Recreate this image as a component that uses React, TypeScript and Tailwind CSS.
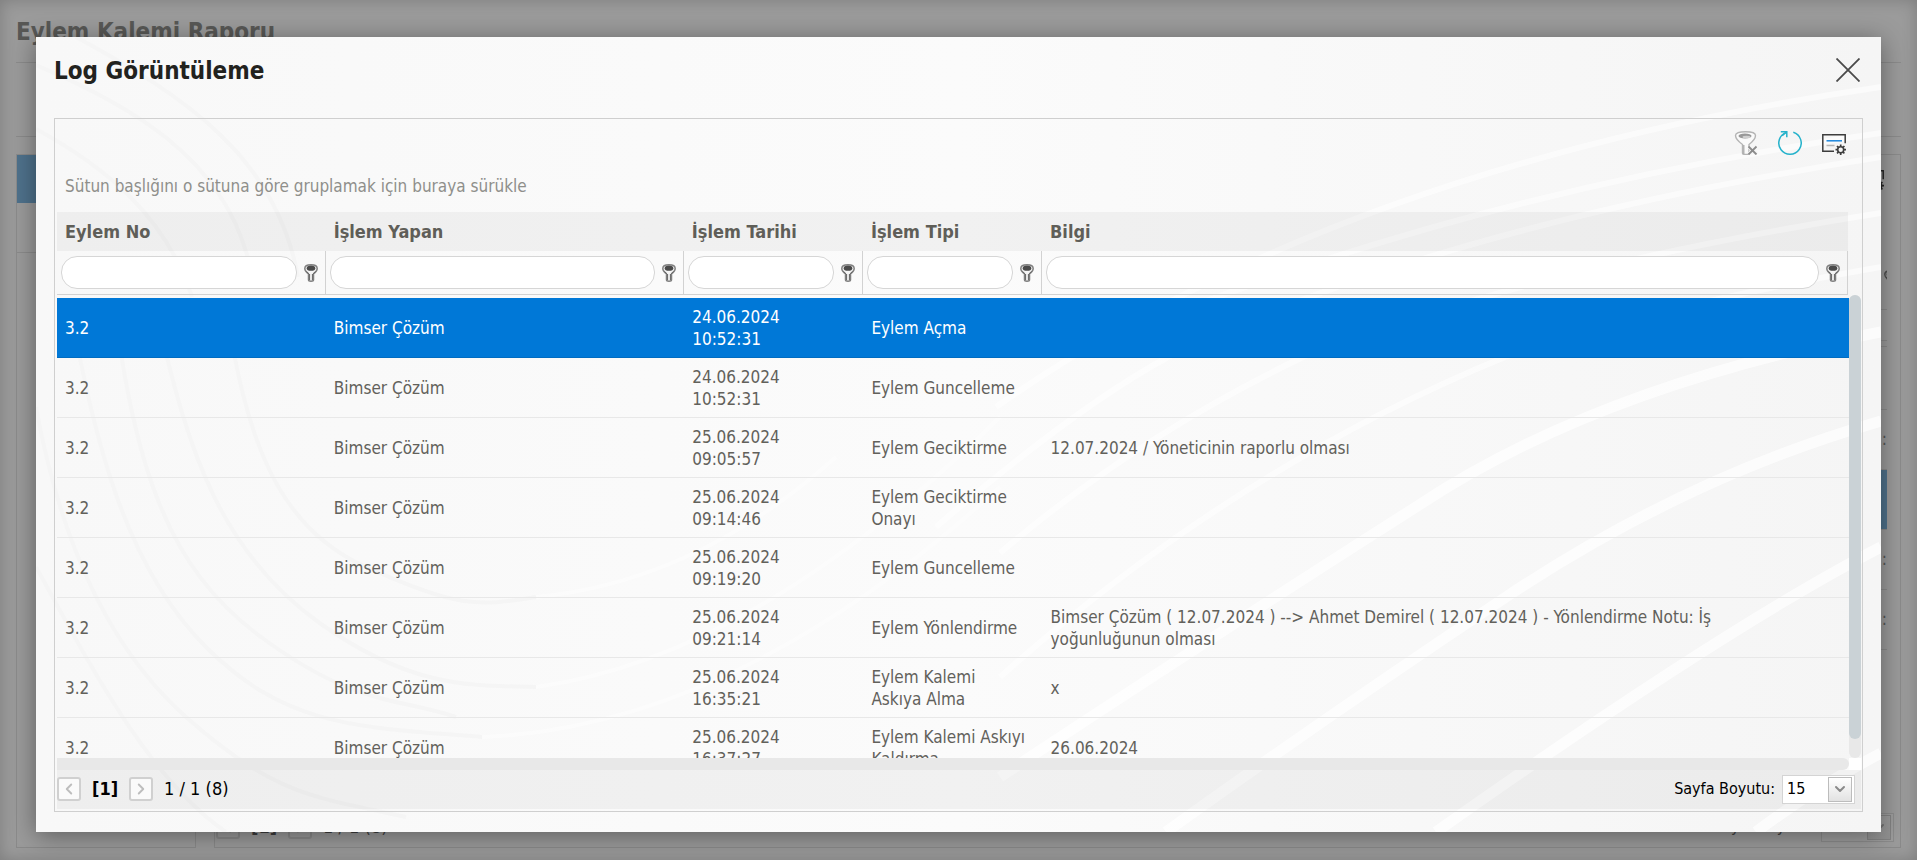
import { ChevronDown, ChevronLeft, ChevronRight } from "lucide-react";
import { useState } from "react";

type LogEntry = {
  id: number;
  actionNo: string;
  user: string;
  date: string;
  type: string;
  info: string;
};

const columns = [
  { key: "actionNo", title: "Eylem No", width: "w-[15%]" },
  { key: "user", title: "İşlem Yapan", width: "w-[20%]" },
  { key: "date", title: "İşlem Tarihi", width: "w-[10%]" },
  { key: "type", title: "İşlem Tipi", width: "w-[10%]" },
  { key: "info", title: "Bilgi", width: "w-[45%]" },
] as const;

const entry = (
  id: number,
  date: string,
  type: string,
  info = "",
): LogEntry => ({ id, actionNo: "3.2", user: "Bimser Çözüm", date, type, info });

const entries: LogEntry[] = [
  entry(1, "24.06.2024\n10:52:31", "Eylem Açma"),
  entry(2, "24.06.2024\n10:52:31", "Eylem Guncelleme"),
  entry(
    3,
    "25.06.2024\n09:05:57",
    "Eylem Geciktirme",
    "12.07.2024 / Yöneticinin raporlu olması",
  ),
  entry(4, "25.06.2024\n09:14:46", "Eylem Geciktirme\nOnayı"),
  entry(5, "25.06.2024\n09:19:20", "Eylem Guncelleme"),
  entry(
    6,
    "25.06.2024\n09:21:14",
    "Eylem Yönlendirme",
    "Bimser Çözüm ( 12.07.2024 ) --> Ahmet Demirel ( 12.07.2024 ) - Yönlendirme Notu: İş\nyoğunluğunun olması",
  ),
  entry(7, "25.06.2024\n16:35:21", "Eylem Kalemi\nAskıya Alma", "x"),
  entry(8, "25.06.2024\n16:37:27", "Eylem Kalemi Askıyı\nKaldırma", "26.06.2024"),
];

const grayWaves = [
  "M0 28 C90 66 190 120 214 230",
  "M0 92 C70 130 130 180 156 260",
  "M40 0 C150 60 240 120 262 240",
  "M120 270 C150 420 190 520 285 587 S440 648 500 650",
  "M78 270 C100 430 130 530 225 600 S360 660 420 680",
  "M34 270 C60 410 90 530 170 610 S320 690 446 700",
  "M0 370 C20 480 60 600 150 680 S280 760 370 780",
  "M190 270 C210 400 240 490 330 530 S440 570 500 560",
  "M0 530 C50 620 110 740 190 795",
];

const whiteWaves = [
  "M1845 96 Q1400 160 1031 320",
  "M1845 50 Q1300 130 960 370",
  "M1845 120 Q1400 190 1132 320 Q1040 370 900 490",
  "M1845 176 Q1500 230 1267 320 Q1100 400 964 516",
  "M1845 230 Q1640 265 1469 320 Q1200 430 964 640",
];

const wideWhiteWaves = [
  "M1845 295 Q1560 350 1380 470 Q1160 610 964 740",
  "M1845 384 Q1650 440 1470 560 Q1290 680 1130 795",
  "M1845 510 Q1690 590 1400 795",
  "M1845 716 Q1780 750 1720 795",
];

const lowerWhiteWaves = [
  "M500 560 Q660 545 800 420",
  "M500 650 Q720 620 964 380",
  "M446 700 Q700 690 964 450",
];

const WaveBackground = () => (
  <svg
    aria-hidden="true"
    className="pointer-events-none absolute inset-0 h-full w-full"
    fill="none"
    preserveAspectRatio="none"
    viewBox="0 0 1845 795"
  >
    <g stroke="#f5f5f5" strokeWidth="4">
      {grayWaves.map((path) => (
        <path d={path} key={path} />
      ))}
    </g>
    <g stroke="#ffffff" strokeOpacity="0.55" strokeWidth="6">
      {whiteWaves.map((path) => (
        <path d={path} key={path} />
      ))}
    </g>
    <g stroke="#ffffff" strokeOpacity="0.7" strokeWidth="11">
      {wideWhiteWaves.map((path) => (
        <path d={path} key={path} />
      ))}
    </g>
    <g stroke="#ffffff" strokeOpacity="0.4" strokeWidth="4">
      {lowerWhiteWaves.map((path) => (
        <path d={path} key={path} />
      ))}
    </g>
  </svg>
);

const FunnelIcon = () => (
  <svg
    aria-hidden="true"
    className="shrink-0"
    fill="none"
    height="18"
    viewBox="0 0 14 18"
    width="14"
  >
    <path
      d="M.8 4.500C.8 2 3 .8 7 .8s6.200 1.200 6.200 3.700c0 2.300-1.400 3.600-3.700 5.500v5.700c0 1-1 1.500-2.500 1.500s-2.500-.5-2.500-1.500V10C2.200 8.100.8 6.800.8 4.500Z"
      fill="#f4f4f4"
      stroke="#808080"
      strokeWidth="1.500"
    />
    <ellipse cx="7" cy="4.200" fill="#4a4a4a" rx="4.300" ry="2.600" />
    <path d="M5.600 10v6M8.400 10v6" stroke="#555" strokeWidth=".9" />
    <path d="M2.500 7.500 5 9.800M11.500 7.500 9 9.800" stroke="#666" />
  </svg>
);

const ClearFilterIcon = () => (
  <svg aria-hidden="true" fill="none" height="24" viewBox="0 0 24 24" width="24">
    <path
      d="M1.500 4.500C1.500 2 5 .8 11.500.8s10 1.200 10 3.700c0 3-2 5.500-6.500 9v8.700c0 .8-1.500 1.300-3.300 1.300s-3.200-.5-3.200-1.300V13.500C3.700 10 1.500 7.500 1.500 4.500Z"
      fill="#fafafa"
      stroke="#b4b4b4"
      strokeWidth="1.400"
    />
    <ellipse cx="11" cy="5" fill="#999" rx="6.500" ry="2.600" />
    <ellipse cx="12.500" cy="6" fill="#d0d0d0" rx="4" ry="1.300" />
    <path d="M9.800 14v9" stroke="#aaa" strokeWidth="1.300" />
    <path
      d="m15 15.500 7.500 7.800M22.500 15.500 15 23.300"
      stroke="#f5f5f5"
      strokeWidth="4"
    />
    <path
      d="m14.500 15.500 8 8M22.500 15.500l-8 8"
      stroke="#8b8b8b"
      strokeWidth="1.800"
    />
  </svg>
);

const RefreshIcon = () => (
  <svg
    aria-hidden="true"
    fill="none"
    height="24"
    stroke="#25b2cb"
    strokeWidth="1.500"
    viewBox="0 0 24 24"
    width="24"
  >
    <path d="M15.300 1.300A11.200 11.200 0 1 1 8.400 1.400" />
    <path d="M2.800.8h6v5.400M8.600 1 4.200 4.800" />
  </svg>
);

const CustomizeIcon = () => (
  <svg
    aria-hidden="true"
    className="shrink-0"
    fill="none"
    height="24"
    viewBox="0 0 24 24"
    width="24"
  >
    <path d="M12 20.300H.8V3.800h22.400v8.500" stroke="#3d3d3d" strokeWidth="1.500" />
    <path d="M4.500 9.800H20" stroke="#1c86dd" strokeWidth="1.500" />
    <path d="M4.500 14.500h8" stroke="#b5b5b5" strokeWidth="1.500" />
    <circle cx="18.700" cy="18.700" r="3" stroke="#3d3d3d" strokeWidth="1.600" />
    <path
      d="M18.700 13.500v2M18.700 22v2M13.500 18.700h2M22 18.700h2M15 15l1.400 1.400M21 21l1.400 1.400M22.400 15 21 16.400M16.400 21 15 22.400"
      stroke="#3d3d3d"
      strokeWidth="1.700"
    />
  </svg>
);

const ColumnWidths = () => (
  <colgroup>
    {columns.map((column) => (
      <col className={column.width} key={column.key} />
    ))}
  </colgroup>
);

const Pager = ({ id }: { id: string }) => (
  <div className="flex h-[39px] shrink-0 items-center justify-between pr-[6px] pb-px text-black">
    <div className="flex items-center gap-[11px]">
      <button
        aria-label="Önceki sayfa"
        className="flex size-6 items-center justify-center rounded-[3px] border-2 border-[#d0d0d0] bg-[#fafafa] text-[#bdbdbd]"
        type="button"
      >
        <ChevronLeft className="shrink-0" size={18} strokeWidth={2.5} />
      </button>
      <b className="text-[18px] leading-6">[1]</b>
      <button
        aria-label="Sonraki sayfa"
        className="flex size-6 items-center justify-center rounded-[3px] border-2 border-[#d0d0d0] bg-[#fafafa] text-[#bdbdbd]"
        type="button"
      >
        <ChevronRight className="shrink-0" size={18} strokeWidth={2.5} />
      </button>
      <span className="text-[18px] leading-6">1 / 1 (8)</span>
    </div>
    <div className="flex items-center gap-[7px]">
      <label className="text-[16px] leading-6" htmlFor={id}>
        Sayfa Boyutu:
      </label>
      <div className="relative">
        <select
          className="block h-[29px] w-[73px] appearance-none border border-[#d4d4d4] bg-white pl-1 text-[16px]"
          defaultValue="15"
          id={id}
        >
          <option>15</option>
          <option>30</option>
          <option>50</option>
        </select>
        <span className="pointer-events-none absolute top-[2px] right-[3px] flex h-[25px] w-6 items-center justify-center border border-[#bcbcbc] bg-linear-to-b from-white to-[#e2e2e2] text-[#8a8a8a]">
          <ChevronDown size={16} strokeWidth={3} />
        </span>
      </div>
    </div>
  </div>
);

const ReportPage = () => (
  <div className="flex h-full flex-col px-4 pb-3" inert>
    <h1 className="h-[62px] pt-4 text-2xl leading-8 font-bold text-[#8f8f8b]">
      Eylem Kalemi Raporu
    </h1>
    <div className="h-[75px] shrink-0 border-y border-[#e0e0e0]" />
    <div className="mt-[17px] flex min-h-0 flex-1 gap-[18px]">
      <aside className="w-[180px] border border-[#e0e0e0]">
        <div className="h-12 bg-[#80b8e2]" />
        <div className="h-[50px] border-b border-[#e0e0e0]" />
      </aside>
      <section className="flex min-w-0 flex-1 flex-col border border-[#e0e0e0] pl-px">
        <div className="flex min-h-0 flex-1 flex-col pr-[13px]">
          <div className="flex h-[94px] justify-end pt-3 pr-[3px]">
            <CustomizeIcon />
          </div>
          <div className="flex h-[61px] items-center justify-end border-b border-[#e0e0e0]">
            <div className="w-[3px] overflow-hidden">
              <FunnelIcon />
            </div>
          </div>
          <div className="h-[31px] border-b border-[#e0e0e0]" />
          <div className="h-[6px] border-b border-[#e0e0e0]" />
          <div className="h-[63px] border-b border-[#e0e0e0]" />
          {[1, 2, 3, 4].map((row) => (
            <div
              className={`flex h-[60px] shrink-0 items-center justify-end border-b border-[#e0e0e0] text-[17px] text-[#8f8f8b] ${
                row === 2 ? "bg-[#80b8e2]" : ""
              }`}
              key={row}
            >
              {row === 2 ? null : "02:"}
            </div>
          ))}
        </div>
        <div className="opacity-60">
          <Pager id="report-page-size" />
        </div>
      </section>
    </div>
  </div>
);

const FilterRow = () => (
  <tr>
    {columns.map((column) => (
      <td
        className="h-11 border-r border-b border-[#d2d2d2] py-0 pr-[7px] pl-1"
        key={column.key}
      >
        <div className="flex items-center gap-[7px]">
          <input
            aria-label={column.title}
            className="h-[33px] min-w-0 flex-1 rounded-2xl border border-[#d6d6d6] bg-white px-3 text-[17px] outline-none"
            type="text"
          />
          <button aria-label={`${column.title} filtresi`} type="button">
            <FunnelIcon />
          </button>
        </div>
      </td>
    ))}
  </tr>
);

const LogTable = () => {
  const [selectedId, setSelectedId] = useState(1);

  return (
    <div className="flex min-h-0 flex-1">
      <div className="min-w-0 flex-1 overflow-hidden">
        <table className="mt-[3px] w-full table-fixed border-separate border-spacing-0 text-[17px] leading-[22px]">
          <ColumnWidths />
          <tbody>
            {entries.map((row) => (
              <tr
                className={
                  row.id === selectedId
                    ? "bg-[#0078d7] text-white"
                    : "text-[#62615b]"
                }
                key={row.id}
                onClick={() => setSelectedId(row.id)}
              >
                {columns.map((column) => (
                  <td
                    className={`h-[60px] border-b px-2 py-0 whitespace-pre ${
                      row.id === selectedId
                        ? "border-[#006cc1]"
                        : "border-[#e8e8e8]"
                    }`}
                    key={column.key}
                  >
                    {row[column.key]}
                  </td>
                ))}
              </tr>
            ))}
          </tbody>
        </table>
      </div>
      <div className="w-3 shrink-0 rounded-md bg-[#e8e8e8]">
        <div className="h-[96%] rounded-md bg-[#cad2d6]" />
      </div>
    </div>
  );
};

const LogDialog = () => (
  <div
    aria-labelledby="log-dialog-title"
    aria-modal="true"
    className="relative flex min-w-0 flex-1 flex-col bg-linear-to-r from-[#f8f8f8] via-[#fbfbfb] to-[#f5f5f5] px-[18px] pb-5 shadow-[0_4px_24px_rgba(0,0,0,0.4)]"
    role="dialog"
  >
    <WaveBackground />
    <header className="relative flex h-[81px] shrink-0 items-start justify-between pt-[18px]">
      <h2
        className="text-2xl leading-8 font-bold text-[#22221e]"
        id="log-dialog-title"
      >
        Log Görüntüleme
      </h2>
      <button aria-label="Kapat" className="mt-[3px] mr-[3px]" type="button">
        <svg
          aria-hidden="true"
          height="24"
          stroke="#4a4a4a"
          strokeWidth="1.800"
          viewBox="0 0 24 24"
          width="24"
        >
          <path d="m.5.5 23 23M23.500.5l-23 23" />
        </svg>
      </button>
    </header>

    <section className="relative flex min-h-0 flex-1 flex-col border border-[#cfcfcf] pr-px pb-[2px] pl-[2px]">
      <div className="flex h-[46px] shrink-0 items-end justify-end gap-5 pr-[15px] pb-[10px]">
        <button aria-label="Filtreyi temizle" type="button">
          <ClearFilterIcon />
        </button>
        <button aria-label="Yenile" type="button">
          <RefreshIcon />
        </button>
        <button aria-label="Sütunları özelleştir" type="button">
          <CustomizeIcon />
        </button>
      </div>
      <p className="h-[47px] shrink-0 px-2 pt-[10px] text-[17px] leading-[22px] text-[#8f8f8b]">
        Sütun başlığını o sütuna göre gruplamak için buraya sürükle
      </p>
      <div className="shrink-0 pr-[13px]">
        <table className="w-full table-fixed border-separate border-spacing-0">
          <ColumnWidths />
          <thead>
            <tr className="bg-black/4 text-left text-[18px] leading-[22px] text-[#5f5e58]">
              {columns.map((column) => (
                <th className="h-[39px] px-2 py-0 font-bold" key={column.key}>
                  {column.title}
                </th>
              ))}
            </tr>
          </thead>
          <tbody>
            <FilterRow />
          </tbody>
        </table>
      </div>
      <LogTable />
      <div className="flex shrink-0">
        <div className="h-3 flex-1 rounded-r-md bg-[#e8e8e8]" />
        <div className="size-3 bg-white" />
      </div>
      <div className="bg-black/4">
        <Pager id="log-page-size" />
      </div>
    </section>
  </div>
);

export default function App() {
  return (
    <div className="relative h-screen overflow-hidden bg-[#fafafa] font-['DejaVu_Sans_Condensed','DejaVu_Sans',sans-serif]">
      <ReportPage />
      <div className="absolute inset-0 flex bg-black/38 px-9 pt-[37px] pb-7 shadow-[inset_0_0_16px_rgba(0,0,0,0.2)]">
        <LogDialog />
      </div>
    </div>
  );
}
